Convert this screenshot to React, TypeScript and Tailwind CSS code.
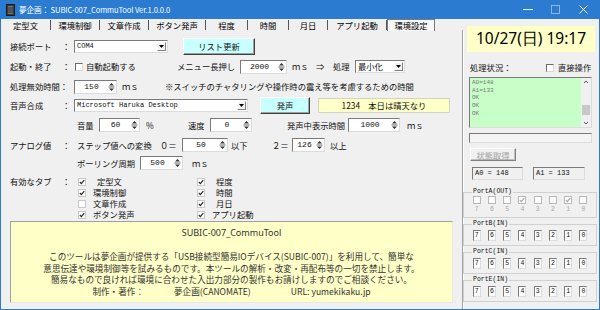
import React from "react";

const ui = "font-['Noto_Sans_CJK_JP',sans-serif]";
const mono = "font-['Liberation_Mono','Noto_Sans_CJK_JP',monospace]";
const sunken = "border border-t-[#7a7a7a] border-l-[#7a7a7a] border-r-[#dcdcdc] border-b-[#dcdcdc]";
const raised = "border border-t-white border-l-white border-r-[#404040] border-b-[#404040] shadow-[inset_-1px_-1px_0_#a0a0a0]";

function Arrows() {
  return (
    <svg width="7" height="10" viewBox="0 0 7 10" className="shrink-0">
      <path d="M3.5 1 L6 3.5 L1 3.5 Z" fill="#333" />
      <path d="M0.5 5 H6.5" stroke="#666" strokeWidth="1" />
      <path d="M1 6.5 L6 6.5 L3.5 9 Z" fill="#333" />
    </svg>
  );
}

function Spin({ value, className }: { value: string; className: string }) {
  return (
    <div className={`flex items-center h-[14px] bg-white ${sunken} ${className}`}>
      <span className={`flex-1 text-center text-[8px] ${mono}`}>{value}</span>
      <span className="pr-[1px] flex items-center">
        <Arrows />
      </span>
    </div>
  );
}

function Combo({ value, className, jp }: { value: string; className: string; jp?: boolean }) {
  return (
    <div className={`flex items-center h-[13px] bg-white ${sunken} ${className}`}>
      <span className={`flex-1 pl-[2px] whitespace-nowrap overflow-hidden ${jp ? "text-[8.3px]" : `text-[7px] ${mono}`}`}>
        {value}
      </span>
      <span className="w-[9px] h-[9px] mr-[1px] flex items-center justify-center border border-t-white border-l-white border-r-[#808080] border-b-[#808080] bg-[#f4f4f4]">
        <svg width="5" height="3" viewBox="0 0 5 3">
          <path d="M0 0H5L2.5 3Z" fill="#000" />
        </svg>
      </span>
    </div>
  );
}

function Check({ on, dim, soft }: { on?: boolean; dim?: boolean; soft?: boolean }) {
  const edge = dim ? "border-[#b8b8b8]" : soft ? "border-[#c8c8c8]" : "border-t-[#6a6a6a] border-l-[#6a6a6a] border-r-[#d8d8d8] border-b-[#d8d8d8]";
  return (
    <span className={`w-[8px] h-[8px] shrink-0 flex items-center justify-center bg-white border ${edge}`}>
      {on && (
        <svg width="6" height="6" viewBox="0 0 6 6">
          <path d="M0.8 3 L2.4 4.6 L5.2 1.2" fill="none" stroke={dim ? "#a8a8a8" : "#222"} strokeWidth="1.1" />
        </svg>
      )}
    </span>
  );
}

function TitleBar() {
  return (
    <div className="h-[19px] bg-[#2b7bd0] flex items-center text-white">
      <svg width="9" height="12" viewBox="0 0 9 12" className="ml-[5px]">
        <rect x="0.5" y="0.5" width="8" height="11" fill="#3b3b3b" stroke="#1b1b1b" />
        <rect x="2" y="2" width="5" height="8" fill="#6e6e6e" />
        <path d="M2 4H7M2 6H7M2 8H7" stroke="#2e2e2e" strokeWidth="0.8" />
      </svg>
      <span className="ml-[4px] text-[7.6px] tracking-[-0.1px]">夢企画： SUBIC-007_CommuTool Ver.1.0.0.0</span>
      <div className="ml-auto flex items-center">
        <svg width="28" height="19" viewBox="0 0 28 19">
          <path d="M9 9.5 H19" stroke="#fff" strokeWidth="1" />
        </svg>
        <svg width="28" height="19" viewBox="0 0 28 19">
          <rect x="9.5" y="5.5" width="8" height="8" fill="none" stroke="#8fb6e6" strokeWidth="1" />
        </svg>
        <svg width="28" height="19" viewBox="0 0 28 19" className="mr-[1px]">
          <path d="M9.5 5.5 L17.5 13.5 M17.5 5.5 L9.5 13.5" stroke="#fff" strokeWidth="1" />
        </svg>
      </div>
    </div>
  );
}

const tabs = [
  { t: "定型文", w: "w-[50px]" },
  { t: "環境制御", w: "w-[49px]" },
  { t: "文章作成", w: "w-[49px]" },
  { t: "ボタン発声", w: "w-[57px]" },
  { t: "程度", w: "w-[42px]" },
  { t: "時間", w: "w-[41px]" },
  { t: "月日", w: "w-[39px]" },
  { t: "アプリ起動", w: "w-[59px]" },
];

function Tabs() {
  return (
    <div className="h-[12px] flex items-stretch text-[8.3px]">
      {tabs.map((tab) => (
        <div key={tab.t} className={`${tab.w} flex items-center`}>
          <span className="flex-1 text-center leading-none">{tab.t}</span>
          <span className="w-[1px] h-[10px] bg-[#555]" />
        </div>
      ))}
      <div className="w-[48px] flex items-center justify-center bg-[#f8f8f8] border border-[#7a7a7a] border-b-0 leading-none">
        環境設定
      </div>
    </div>
  );
}

function Label({ children, w }: { children: React.ReactNode; w: string }) {
  return <span className={`${w} shrink-0 whitespace-nowrap`}>{children}</span>;
}

function TabRow({ head, c1, c2, on1, on2, p1, p2 }: { head?: boolean; c1: string; c2: string; on1: boolean; on2: boolean; p1: string; p2: string }) {
  return (
    <div className="h-[11px] flex items-center pl-[9px]">
      <Label w="w-[52px]">{head ? "有効なタブ" : ""}</Label>
      <Label w="w-[12px]">{head ? "：" : ""}</Label>
      <div className="w-[123px] flex items-center pl-[4px]">
        <Check on={on1} soft />
        <span className={p1}>{c1}</span>
      </div>
      <div className="flex items-center">
        <Check on={on2} soft />
        <span className={p2}>{c2}</span>
      </div>
    </div>
  );
}

function Settings() {
  return (
    <div className="pt-[5px] flex flex-col text-[8.3px] text-[#111]">
      <div className="h-[20px] flex items-center pl-[9px]">
        <Label w="w-[52px]">接続ポート</Label>
        <Label w="w-[12px]">：</Label>
        <Combo value="COM4" className="w-[94px]" />
        <button className={`ml-[15px] w-[72px] h-[17px] bg-[#c8ffff] ${raised} text-[8.3px]`}>リスト更新</button>
      </div>
      <div className="h-[21px] flex items-center pl-[9px]">
        <Label w="w-[52px]">起動・終了</Label>
        <Label w="w-[12px]">：</Label>
        <div className="w-[103px] flex items-center pl-[1px]">
          <Check />
          <span className="ml-[3px]">自動起動する</span>
        </div>
        <Label w="w-[63px]">メニュー長押し</Label>
        <Spin value="2000" className="w-[47px]" />
        <Label w="w-[29px] pl-[5px]">ｍｓ</Label>
        <Label w="w-[17px]">⇒</Label>
        <Label w="w-[22px]">処理</Label>
        <Combo value="最小化" jp className="w-[50px]" />
      </div>
      <div className="h-[19px] flex items-center pl-[9px]">
        <Label w="w-[64px]">処理無効時間：</Label>
        <Spin value="150" className="w-[43px]" />
        <Label w="w-[48px] pl-[5px]">ｍｓ</Label>
        <span className="whitespace-nowrap">※スイッチのチャタリングや操作時の震え等を考慮するための時間</span>
      </div>
      <div className="h-[19px] flex items-center pl-[9px]">
        <Label w="w-[52px]">音声合成</Label>
        <Label w="w-[12px]">：</Label>
        <Combo value="Microsoft Haruka Desktop" className="w-[174px]" />
        <button className={`ml-[12px] w-[50px] h-[17px] bg-[#c8ffff] ${raised} text-[8.3px]`}>発声</button>
        <div className="ml-[8px] w-[132px] h-[15px] flex items-center justify-center bg-[#ffffc8] border border-[#d4d4c0]">
          1234　本日は晴天なり
        </div>
      </div>
      <div className="h-[20px] flex items-center pl-[73px]">
        <Label w="w-[25px] pl-[3px]">音量</Label>
        <Spin value="60" className="w-[41px]" />
        <Label w="w-[48px] pl-[6px]">%</Label>
        <Label w="w-[22px]">速度</Label>
        <Spin value="0" className="w-[42px]" />
        <span className="w-[35px]" />
        <Label w="w-[61px]">発声中表示時間</Label>
        <Spin value="1000" className="w-[52px]" />
        <Label w="w-[30px] pl-[7px]">ｍｓ</Label>
      </div>
      <div className="h-[20px] flex items-center pl-[9px]">
        <Label w="w-[52px]">アナログ値</Label>
        <Label w="w-[12px]">：</Label>
        <Label w="w-[86px] pl-[3px]">ステップ値への変換</Label>
        <Label w="w-[22px]">０＝</Label>
        <Spin value="50" className="w-[46px]" />
        <Label w="w-[44px] pl-[3px]">以下</Label>
        <Label w="w-[20px]">２＝</Label>
        <Spin value="126" className="w-[33px]" />
        <Label w="w-[30px] pl-[5px]">以上</Label>
      </div>
      <div className="h-[16px] flex items-center pl-[73px]">
        <Label w="w-[66px] pl-[3px]">ポーリング周期</Label>
        <Spin value="500" className="w-[43px]" />
        <Label w="w-[30px] pl-[9px]">ｍｓ</Label>
      </div>
      <div className="mt-[5px] flex flex-col">
        <TabRow head c1="定型文" c2="程度" on1 on2 p1="ml-[11px]" p2="ml-[11px]" />
        <TabRow c1="環境制御" c2="時間" on1 on2 p1="ml-[7px]" p2="ml-[11px]" />
        <TabRow c1="文章作成" c2="月日" on1={false} on2 p1="ml-[7px]" p2="ml-[11px]" />
        <TabRow c1="ボタン発声" c2="アプリ起動" on1 on2 p1="ml-[7px]" p2="ml-[7px]" />
      </div>
      <div className="mt-[1px] ml-[9px] w-[443px] h-[82px] bg-[#ffffc8] border border-t-[#a0a0a0] border-l-[#a0a0a0] border-r-[#e8e8e8] border-b-[#e8e8e8] flex flex-col items-center text-[#333] pt-[5px]">
        <div className="h-[12px] leading-[12px] text-[9px] font-['Noto_Sans',sans-serif]">SUBIC-007_CommuTool</div>
        <div className="mt-[12px] flex flex-col items-center text-[8.6px] leading-[11.5px] whitespace-nowrap">
          <span>このツールは夢企画が提供する「USB接続型簡易IOデバイス(SUBIC-007)」を利用して、簡単な</span>
          <span>意思伝達や環境制御等を試みるものです。本ツールの解析・改変・再配布等の一切を禁止します。</span>
          <span>簡易なもので良ければ環境に合わせた入出力部分の製作もお請けしますのでご相談ください。</span>
          <span>
            制作・著作：<span className="ml-[30px]">夢企画(CANOMATE)</span>
            <span className="ml-[40px]">URL: yumekikaku.jp</span>
          </span>
        </div>
      </div>
    </div>
  );
}

function Port({ name, out, on }: { name: string; out?: boolean; on?: boolean[] }) {
  const bits = ["7", "6", "5", "4", "3", "2", "1", "0"];
  return (
    <fieldset className="ml-[-1px] w-[134px] border border-[#d0d0d0] px-[5px]">
      <legend className={`ml-[3px] px-[1px] text-[6.5px] leading-[8px] ${mono}`}>{name}</legend>
      {out ? (
        <div className="grid grid-cols-8 pb-[2px]">
          {bits.map((b, i) => (
            <div key={b} className="flex flex-col items-center">
              <Check dim on={on?.[i]} />
              <span className={`text-[6.5px] leading-[11px] text-[#a8a8a8] ${mono}`}>{b}</span>
            </div>
          ))}
        </div>
      ) : (
        <div className="grid grid-cols-8 pt-[2px] pb-[4px]">
          {bits.map((b) => (
            <div key={b} className="flex justify-center">
              <span className={`w-[8px] h-[11px] flex items-center justify-center bg-white text-[6.5px] ${mono} ${sunken}`}>{b}</span>
            </div>
          ))}
        </div>
      )}
    </fieldset>
  );
}

function Status() {
  const lines = ["A0=148", "A1=133", "OK", "OK", "OK"];
  return (
    <div className="w-[135px] flex flex-col pt-[7px] text-[8.3px] text-[#111]">
      <div className="ml-[3px] w-[128px] h-[26px] bg-[#ffffc8] flex items-center justify-center text-[15.5px] font-['Noto_Sans',sans-serif] text-black">
        10/27(日) 19:17
      </div>
      <div className="mt-[6px] h-[19px] flex items-center pl-[6px]">
        <Label w="w-[76px]">処理状況：</Label>
        <Check />
        <span className="ml-[4px]">直接操作</span>
      </div>
      <div className={`ml-[5px] w-[123px] h-[51px] bg-[#c8ffc8] flex ${sunken}`}>
        <div className="flex-1 flex flex-col pl-[2px] pt-[1px]">
          {lines.map((l, i) => (
            <span key={i} className={`h-[7.7px] leading-[7.7px] text-[6px] text-[#777] ${mono}`}>{l}</span>
          ))}
        </div>
        <div className="w-[10px] bg-[#f0f0f0] flex flex-col items-center">
          <svg width="6" height="8" viewBox="0 0 6 8"><path d="M1 5 L3 3 L5 5" fill="none" stroke="#555" /></svg>
          <span className="mt-[19px] w-[8px] h-[10px] bg-[#c8c8c8]" />
          <svg width="6" height="8" viewBox="0 0 6 8" className="mt-auto"><path d="M1 3 L3 5 L5 3" fill="none" stroke="#555" /></svg>
        </div>
      </div>
      <div className={`mt-[5px] ml-[5px] w-[123px] h-[10px] bg-[#f4f4f4] ${sunken}`} />
      <button className="mt-[5px] ml-[6px] w-[46px] h-[13px] text-[8.3px] text-[#a0a0a0] bg-[#f0f0f0] border border-t-white border-l-white border-r-[#808080] border-b-[#808080] shadow-[inset_-1px_-1px_0_#c0c0c0]">
        状態取得
      </button>
      <div className="mt-[6px] ml-[8px] flex items-center">
        <span className={`w-[51px] h-[13px] flex items-center pl-[2px] text-[7px] ${mono} bg-[#f0f0f0] ${sunken}`}>A0 = 148</span>
        <span className={`ml-[10px] w-[52px] h-[13px] flex items-center pl-[2px] text-[7px] ${mono} bg-[#f0f0f0] ${sunken}`}>A1 = 133</span>
      </div>
      <div className="mt-[8px] flex flex-col gap-[2px]">
        <Port name="PortA(OUT)" out on={[false, false, false, true, false, false, true, false]} />
        <Port name="PortB(IN)" />
        <Port name="PortC(IN)" />
        <Port name="PortE(IN)" />
      </div>
    </div>
  );
}

export default function App() {
  return (
    <div className={`w-[600px] h-[310px] overflow-hidden bg-[#f0f0f0] border-x border-b border-[#2b7bd0] flex flex-col ${ui}`}>
      <TitleBar />
      <div className="flex flex-1">
        <div className="w-[461px] flex flex-col">
          <Tabs />
          <Settings />
        </div>
        <div className="w-[2px] mt-[11px] border-l border-[#a0a0a0] border-r border-r-white" />
        <Status />
      </div>
    </div>
  );
}
